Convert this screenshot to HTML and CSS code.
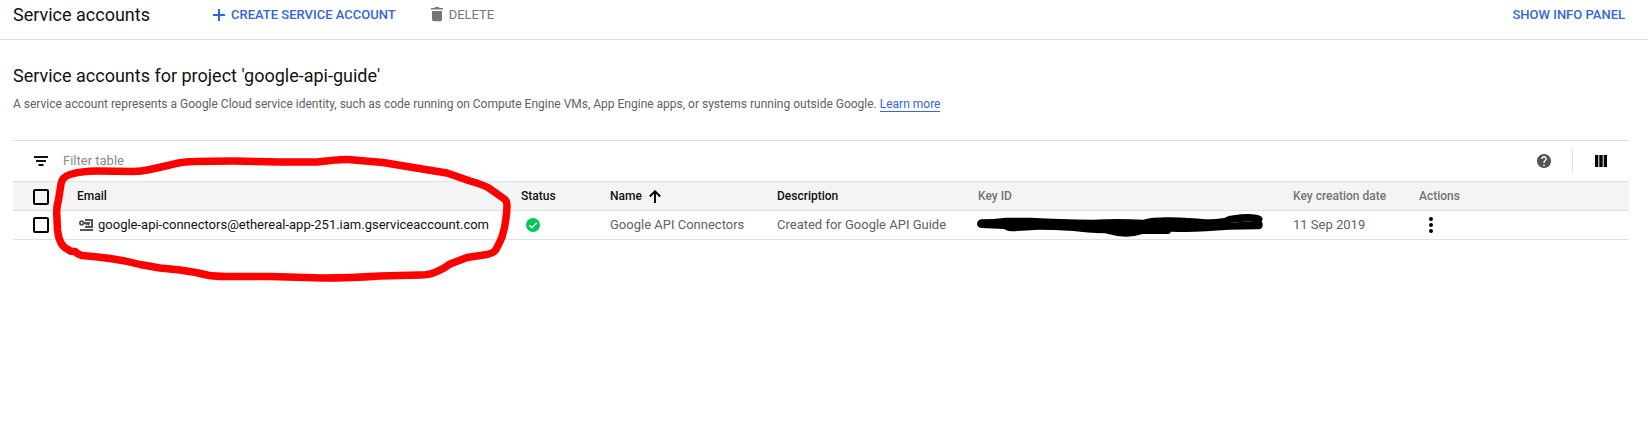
FILE: index.html
```html
<!DOCTYPE html>
<html lang="en">
<head>
<meta charset="utf-8">
<title>Service accounts</title>
<link rel="stylesheet" href="styles.css">
</head>
<body>
<header class="toolbar">
  <h1 class="toolbar-title">Service accounts</h1>
  <button class="action create">
    <svg width="12" height="12" viewBox="0 0 12 12"><path d="M5 0h2v5h5v2H7v5H5V7H0V5h5z" fill="currentColor"/></svg>
    CREATE SERVICE ACCOUNT
  </button>
  <button class="action delete">
    <svg width="12" height="15" viewBox="0 0 12 15"><path d="M0 1h3.500l1-1h3l1 1H12v1.500H0zM1 4h10v8.500a1.700 1.700 0 0 1-1.700 1.700H2.700A1.700 1.700 0 0 1 1 12.500z" fill="currentColor"/></svg>
    DELETE
  </button>
  <button class="action info">SHOW INFO PANEL</button>
</header>
<main class="content">
  <h2 class="heading">Service accounts for project 'google-api-guide'</h2>
  <p class="intro">A service account represents a Google Cloud service identity, such as code running on Compute Engine VMs, App Engine apps, or systems running outside Google. <a class="link">Learn more</a></p>
  <section class="table">
    <div class="filter">
      <svg class="filter-icon" width="14" height="10" viewBox="0 0 14 10"><path d="M0 0h14v2H0zM2 4h10v2H2zM4.500 8h5v2h-5z" fill="#111"/></svg>
      <span class="filter-label">Filter table</span>
      <svg class="help" width="14" height="14" viewBox="2 2 20 20"><path fill="#555" d="M12 2C6.480 2 2 6.480 2 12s4.480 10 10 10 10-4.480 10-10S17.520 2 12 2zm1 17h-2v-2h2v2zm2.070-7.750l-.9.920C13.450 12.900 13 13.500 13 15h-2v-.5c0-1.100.45-2.100 1.170-2.830l1.240-1.260c.37-.36.59-.86.59-1.410 0-1.100-.9-2-2-2s-2 .9-2 2H8c0-2.210 1.790-4 4-4s4 1.790 4 4c0 .88-.36 1.680-.93 2.250z"/></svg>
      <span class="divider"></span>
      <svg class="columns" width="12" height="12" viewBox="0 0 12 12"><path d="M0 0h3.300v12H0zM4.300 0h3.400v12H4.300zM8.700 0H12v12H8.700z"/></svg>
    </div>
    <div class="row head">
      <span class="check"></span>
      <span class="dark">Email</span>
      <span class="dark">Status</span>
      <span class="dark name">Name
        <svg width="12" height="13" viewBox="0 0 12 13"><path d="M6 13V1.500M.8 6.500L6 1.300l5.200 5.200" fill="none" stroke="#000" stroke-width="1.900"/></svg>
      </span>
      <span class="dark">Description</span>
      <span>Key ID</span>
      <span>Key creation date</span>
      <span>Actions</span>
    </div>
    <div class="row">
      <span class="check"></span>
      <span class="email">
        <svg width="14" height="12" viewBox="0 0 14 12"><g fill="none" stroke="#555"><circle cx="2.700" cy="4" r="1.800" stroke-width="1.800"/><path d="M4.500 4H11M9.500 4v2.500M7.500 4v2" stroke-width="1.800"/><path d="M6 1h7v7H6" stroke-width="2"/><path d="M1 11h13" stroke-width="2"/></g></svg>
        google-api-connectors@ethereal-app-251.iam.gserviceaccount.com
      </span>
      <span class="status"><svg width="14" height="14" viewBox="0 0 14 14"><circle cx="7" cy="7" r="7" fill="#00c853"/><path d="M3.300 7.200l2.500 2.500 5-5" fill="none" stroke="#fff" stroke-width="1.400"/></svg></span>
      <span>Google API Connectors</span>
      <span>Created for Google API Guide</span>
      <span class="redacted"><svg width="290" height="28" viewBox="54 93 870 84"><path d="M64 118Q100 118 137 113L215 113Q300 117 400 119Q470 115 550 119Q580 111 630 112Q690 113 735 118Q770 118 793 114Q805 106 820 106Q860 99 890 104Q908 107 908 118L905 124Q910 133 907 140Q905 148 892 148Q800 148 740 154Q680 158 633 155Q631 163 621 162L548 162Q525 170 498 170Q465 169 435 160Q380 158 340 153Q280 149 235 149Q190 152 155 154Q138 152 132 147L64 144Q51 141 51 131Q52 120 64 118Z"/><path d="M813 127h24M848 124h30" stroke="#777" stroke-width="1.500"/></svg></span>
      <span>11 Sep 2019</span>
      <span class="menu"><svg width="4" height="16" viewBox="0 0 4 16"><circle cx="2" cy="2" r="2"/><circle cx="2" cy="8" r="2"/><circle cx="2" cy="14" r="2"/></svg></span>
    </div>
  </section>
</main>
<svg class="annotation" width="470" height="135" viewBox="45 150 470 135"><path d="M56.700 213Q56.500 206 58.500 200L61 184Q62 177 70 174.500Q82 171 97 171L133 171.500Q141 171.500 150 169.500L170 165Q182 161.500 195 161.500Q213 161 233 161L280 162L317 162Q338 159.300 348 159.500L383 162.500L413 167.500L447 173L470 181Q481 184 488 187.500L503 198Q507 200 507 205Q507 212 506 218Q505 228 502 237Q499 244 496 249.500Q494 253 487 254.500L467 257.500Q458 261 450 264Q445 268 437 271.500Q430 275 420 275L380 276Q350 278 323 278L270 276.500L227 276.500Q215 276.500 207 275Q195 272 180 270L160 268L140 264.500Q125 260.500 110 258.500Q95 256.500 82 255.500Q78 254.500 75 251.500Q71 252 68 249.500Q63 247 61 243Q58 237 57.500 230Z"/></svg>
</body>
</html>
```
FILE: styles.css
```css
* { box-sizing: border-box; }
body {
  margin: 0;
  position: relative;
  height: 439px;
  overflow: hidden;
  background: #fff;
  font: 13px/16px Roboto, "Liberation Sans", sans-serif;
  color: #616161;
}
svg { display: block; flex: none; }
.toolbar {
  display: flex;
  align-items: center;
  height: 40px;
  padding: 0 23px 10px 13px;
  border-bottom: 1px solid #dfe1e2;
}
.toolbar-title, .heading {
  margin: 0;
  font-size: 18px;
  line-height: 24px;
  font-weight: 400;
  color: #111;
  white-space: nowrap;
}
.toolbar-title { width: 200px; }
.action {
  display: flex;
  align-items: center;
  gap: 6px;
  padding: 0;
  border: 0;
  background: none;
  font: 500 13px/16px Roboto, sans-serif;
  color: #3367d6;
  white-space: nowrap;
}
.delete { margin-left: 35px; color: #757575; font-weight: 400; }
.info { margin-left: auto; }
.content { padding: 24px 19px 0 13px; }
.intro { margin: 8px 0 0; font-size: 12px; line-height: 16px; letter-spacing: -0.003px; }
.link { color: #3367d6; border-bottom: 1px solid #3367d6; }
.table { margin-top: 28px; border-top: 1px solid #e0e0e0; }
.filter { display: flex; align-items: center; height: 40px; padding: 0 22px 0 21px; }
.filter-label { margin-left: 15px; color: #8a8a8a; }
.help { margin-left: auto; }
.divider { width: 1px; height: 24px; margin: 0 22px 0 21px; background: #e0e0e0; }
.row {
  display: grid;
  grid-template-columns: 44px 444px 89px 167px 201px 315px 126px 1fr;
  align-items: center;
  height: 29px;
  padding-left: 20px;
  border-top: 1px solid #e0e0e0;
  white-space: nowrap;
}
.row:last-child { height: 30px; border-bottom: 1px solid #e0e0e0; }
.head { background: #f4f4f4; font-size: 12px; font-weight: 500; color: #757575; }
.dark, .email { color: #111; }
.name { display: flex; align-items: center; gap: 7px; }
.check { width: 16px; height: 16px; border: 2px solid #000; border-radius: 2px; }
.head .check { margin-top: 2px; }
.email { display: flex; align-items: center; gap: 5px; padding-left: 2px; }
.status { padding-left: 5px; }
.menu { padding-left: 10px; }
.redacted svg { overflow: visible; }
.annotation {
  position: absolute;
  left: 45px;
  top: 150px;
  fill: none;
  stroke: #f00;
  stroke-width: 7.5;
  stroke-linejoin: round;
}
```
